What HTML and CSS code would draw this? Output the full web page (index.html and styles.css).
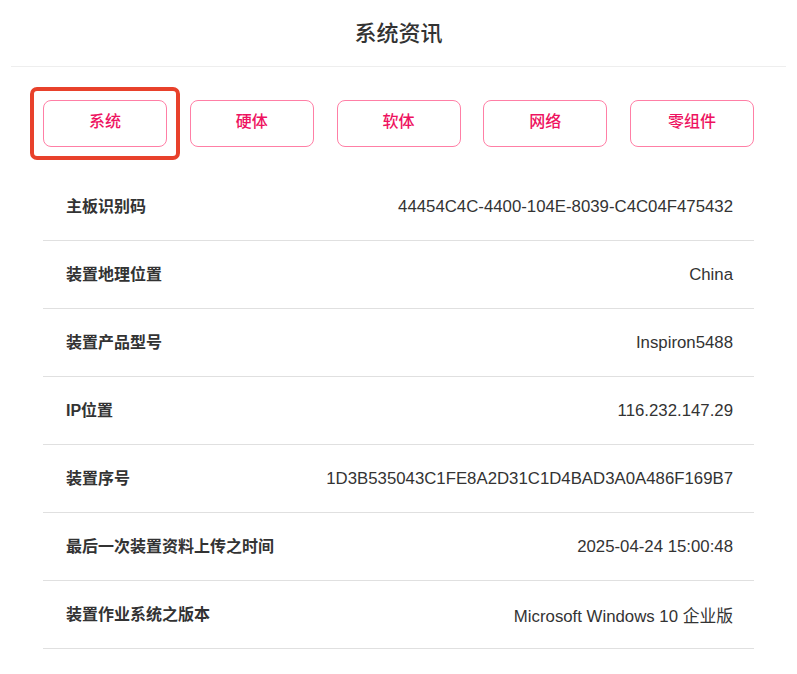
FILE: index.html
```html
<!DOCTYPE html>
<html lang="zh">
<head>
<meta charset="utf-8">
<link rel="stylesheet" href="styles.css">
</head>
<body>
<div class="page">
  <header class="header"><h1 class="title">系统资讯</h1></header>
  <nav class="tabs">
    <div class="tab-wrap">
      <button class="tab">系统</button>
      <span class="highlight"></span>
    </div>
    <button class="tab">硬体</button>
    <button class="tab">软体</button>
    <button class="tab">网络</button>
    <button class="tab">零组件</button>
  </nav>
  <div class="list">
    <div class="row"><span class="label">主板识别码</span><span class="value">44454C4C-4400-104E-8039-C4C04F475432</span></div>
    <div class="row"><span class="label">装置地理位置</span><span class="value">China</span></div>
    <div class="row"><span class="label">装置产品型号</span><span class="value">Inspiron5488</span></div>
    <div class="row"><span class="label">IP位置</span><span class="value">116.232.147.29</span></div>
    <div class="row"><span class="label">装置序号</span><span class="value">1D3B535043C1FE8A2D31C1D4BAD3A0A486F169B7</span></div>
    <div class="row"><span class="label">最后一次装置资料上传之时间</span><span class="value">2025-04-24 15:00:48</span></div>
    <div class="row"><span class="label">装置作业系统之版本</span><span class="value">Microsoft Windows 10 企业版</span></div>
  </div>
</div>
</body>
</html>
```
FILE: styles.css
```css
* { box-sizing: border-box; }
html, body { margin: 0; padding: 0; background: #fff; }
body {
  font-family: "Liberation Sans", "Noto Sans CJK SC", sans-serif;
  color: #333;
}
.page { width: 797px; }
.header {
  margin: 0 11px;
  height: 67px;
  padding-bottom: 5px;
  border-bottom: 1px solid #eeeeee;
  display: flex;
  align-items: center;
  justify-content: center;
}
.title {
  margin: 0;
  font-family: "Noto Sans CJK SC", sans-serif;
  font-size: 22px;
  font-weight: 500;
  color: #333;
  line-height: 1;
}
.tabs {
  display: flex;
  justify-content: space-between;
  padding: 33px 43px 0 43px;
}
.tab-wrap { position: relative; display: flex; }
.tab {
  width: 124px;
  height: 47px;
  border: 1px solid #ff7fa6;
  border-radius: 8px;
  background: #fff;
  color: #ee1260;
  font-family: "Noto Sans CJK SC", sans-serif;
  font-size: 16px;
  font-weight: 500;
  padding: 0 0 7px 0;
  cursor: pointer;
}
.highlight {
  position: absolute;
  left: -13px;
  top: -13px;
  width: 150px;
  height: 73px;
  border: 4px solid #e8412b;
  border-radius: 7px;
  pointer-events: none;
}
.list {
  margin: 26px 43px 0 43px;
}
.row {
  display: flex;
  align-items: center;
  justify-content: space-between;
  height: 68px;
  padding: 0 21px 0 23px;
  border-bottom: 1px solid #e0e0e0;
}
.label {
  font-family: "Liberation Sans", "Noto Sans CJK SC", sans-serif;
  font-weight: 700;
  font-size: 16px;
  color: #333;
  padding-bottom: 4px;
}
.value {
  font-size: 16.8px;
  color: #333;
  padding-top: 1px;
}
```
